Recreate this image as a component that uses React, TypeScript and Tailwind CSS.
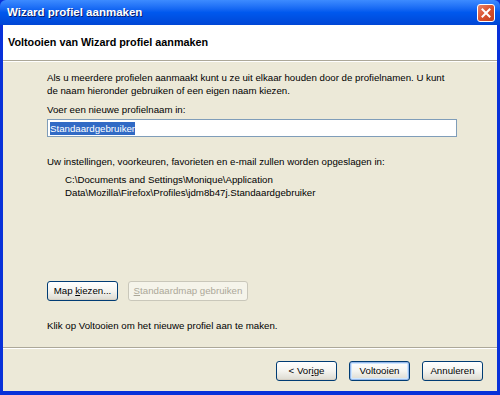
import React from "react";

const font = { fontFamily: "'Liberation Sans', Arial, sans-serif" };

function XpButton({
  children,
  disabled,
  primary,
  className = "",
}: {
  children: React.ReactNode;
  disabled?: boolean;
  primary?: boolean;
  className?: string;
}) {
  if (disabled) {
    return (
      <div
        className={`flex h-[20px] items-center justify-center rounded-[3px] border border-[#c9c7ba] bg-[#f5f4ea] text-[#aca899] ${className}`}
      >
        <span>{children}</span>
      </div>
    );
  }
  return (
    <div
      className={`flex h-[20px] items-center justify-center rounded-[3px] border border-[#003c74] bg-gradient-to-b from-white via-[#f4f4f0] to-[#dcdad0] text-black ${
        primary ? "shadow-[inset_0_0_0_1px_#98b8ea,inset_0_0_0_2px_#cee7ff]" : "shadow-[inset_0_-1px_0_#d6d0c5]"
      } ${className}`}
    >
      <span>{children}</span>
    </div>
  );
}

export default function App() {
  return (
    <div className="flex h-[395px] w-[500px] flex-col overflow-hidden bg-[#0831d9] text-[9.7px] text-black" style={font}>
      {/* title bar */}
      <div className="flex h-[25px] shrink-0 items-center justify-between rounded-t-[6px] bg-gradient-to-b from-[#3d8bff] via-[#0058ee] to-[#0046d5] pl-[7px] pr-[5px]">
        <span className="text-[11.5px] font-bold text-white [text-shadow:1px_1px_0_#0a1e6e]">Wizard profiel aanmaken</span>
        <div className="flex h-[18px] w-[18px] items-center justify-center rounded-[3px] border border-white bg-gradient-to-br from-[#e8836a] via-[#d9512d] to-[#c1401e]">
          <svg width="10" height="10" viewBox="0 0 10 10">
            <path d="M1.5 1.5 L8.5 8.5 M8.5 1.5 L1.5 8.5" stroke="white" strokeWidth="2" strokeLinecap="square" />
          </svg>
        </div>
      </div>

      {/* window client */}
      <div className="mx-[3px] mb-[4px] flex flex-1 flex-col bg-[#ece9d8]">
        <div className="flex h-[35px] shrink-0 items-center bg-white pl-[5px]">
          <span className="text-[10.8px] font-bold">Voltooien van Wizard profiel aanmaken</span>
        </div>
        <div className="h-[1px] bg-[#aca899]" />
        <div className="h-[1px] bg-white" />

        <div className="flex flex-1 flex-col pl-[44px] pt-[9px]">
          <p className="w-[404px] leading-[13px]">
            Als u meerdere profielen aanmaakt kunt u ze uit elkaar houden door de profielnamen. U kunt de naam hieronder
            gebruiken of een eigen naam kiezen.
          </p>
          <p className="mt-[6px] leading-[13px]">Voer een nieuwe profielnaam in:</p>
          <div className="mt-[3px] flex h-[18px] w-[410px] items-center border border-[#7f9db9] bg-white pl-[2px]">
            <span className="bg-[#316ac5] leading-[13px] text-white">Standaardgebruiker</span>
          </div>

          <p className="mt-[18px] leading-[13px]">
            Uw instellingen, voorkeuren, favorieten en e-mail zullen worden opgeslagen in:
          </p>
          <p className="mt-[5px] pl-[18px] leading-[13px]">
            C:\Documents and Settings\Monique\Application
            <br />
            Data\Mozilla\Firefox\Profiles\jdm8b47j.Standaardgebruiker
          </p>

          <div className="mt-[82px] flex gap-[10px]">
            <XpButton className="w-[71px]">
              Map <span className="underline">k</span>iezen...
            </XpButton>
            <XpButton disabled className="w-[120px]">
              <span className="underline">S</span>tandaardmap gebruiken
            </XpButton>
          </div>

          <p className="mt-[18px] leading-[13px]">Klik op Voltooien om het nieuwe profiel aan te maken.</p>
        </div>

        <div className="h-[1px] bg-[#aca899]" />
        <div className="h-[1px] bg-white" />
        <div className="flex h-[42px] shrink-0 items-center justify-end gap-[12px] pr-[14px] pt-[2px]">
          <XpButton className="w-[61px]">
            &lt; Vor<span className="underline">i</span>ge
          </XpButton>
          <XpButton primary className="w-[61px]">
            Voltooien
          </XpButton>
          <XpButton className="w-[61px]">Annuleren</XpButton>
        </div>
      </div>
    </div>
  );
}
